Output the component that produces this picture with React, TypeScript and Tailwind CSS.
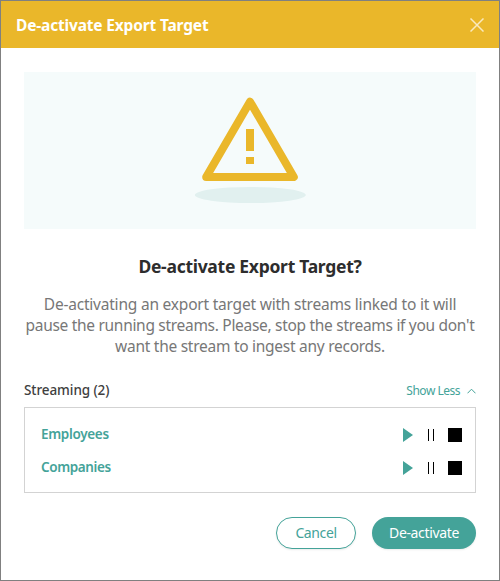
import React from "react";

function Play() {
  return (
    <svg width="10" height="14" viewBox="0 0 10 14" className="block">
      <path d="M0 0L10 7L0 14Z" fill="#44a399" />
    </svg>
  );
}

function Pause() {
  return (
    <div className="ml-[15px] flex h-3 w-1.5 justify-between">
      <span className="w-px bg-black" />
      <span className="w-px bg-black" />
    </div>
  );
}

function StreamRow({ name, tracking }: { name: string; tracking: string }) {
  return (
    <div className="flex h-[33px] items-center">
      <span className={`flex-1 text-[13.5px] font-semibold text-[#44a399] ${tracking}`}>{name}</span>
      <Play />
      <Pause />
      <span className="ml-[14px] size-3.5 bg-black" />
    </div>
  );
}

export default function App() {
  return (
    <div className="flex h-[581px] w-[500px] flex-col border border-[#808080] bg-white font-['Noto_Sans','Open_Sans',sans-serif] whitespace-nowrap">
      <header className="flex h-[47px] items-center justify-between bg-[#eab72a] pr-[15px] pl-[15px]">
        <h1 className="pt-[2px] text-[15.5px] font-bold tracking-[-0.17px] text-white">De-activate Export Target</h1>
        <button aria-label="Close">
          <svg width="14" height="14" viewBox="0 0 14 14" fill="none" stroke="#f9e9be" strokeWidth="1.5" className="block">
            <path d="M0.5 0.5L13.5 13.5M13.5 0.5L0.5 13.5" />
          </svg>
        </button>
      </header>
      <main className="flex flex-col px-[23px] pt-6">
        <div className="flex h-[157px] justify-center bg-[#f5fbfb]">
          <svg width="120" height="157" viewBox="190 72 120 157">
            <ellipse cx="250.3" cy="195" rx="55.5" ry="8" fill="#e1f0ef" />
            <path d="M250 101.700L293.800 177H206.200Z" fill="none" stroke="#eab72a" strokeWidth="8" strokeLinejoin="round" />
            <path d="M246 129H254V151H246ZM246 157H254V164H246Z" fill="#eab72a" />
          </svg>
        </div>
        <h2 className="mt-[24px] text-center text-[17.5px] leading-[26px] font-bold tracking-[-0.28px] text-[#2d2d2d]">De-activate Export Target?</h2>
        <p className="mt-[15px] text-center text-[15.5px] leading-[21px] text-[#777777]">
          <span className="block tracking-[-0.21px]">De-activating an export target with streams linked to it will</span>
          <span className="block tracking-[-0.3px]">pause the running streams. Please, stop the streams if you don't</span>
          <span className="block tracking-[-0.27px]">want the stream to ingest any records.</span>
        </p>
        <div className="mt-[24px] flex h-[20px] items-center justify-between">
          <span className="pb-px text-[13.5px] font-medium tracking-[-0.08px] text-[#404040]">Streaming (2)</span>
          <span className="flex items-center gap-[7px] text-[12px] tracking-[-0.5px] text-[#44a399]">
            Show Less
            <svg width="9" height="6" viewBox="0 0 9 6" fill="none" stroke="currentColor">
              <path d="M0.500 5.300L4.500 1.200L8.500 5.300" />
            </svg>
          </span>
        </div>
        <div className="mt-[6px] h-[86px] border border-[#d3d3d3] pt-[10px] pr-[13px] pl-4">
          <StreamRow name="Employees" tracking="tracking-[-0.33px]" />
          <StreamRow name="Companies" tracking="tracking-[-0.4px]" />
        </div>
        <div className="mt-6 flex justify-end gap-4 text-[14px]">
          <button className="h-8 w-20 rounded-full border border-[#44a399] bg-white pb-0.5 tracking-[-0.4px] text-[#44a399] shadow-[0_1px_2px_rgba(0,0,0,0.08)]">Cancel</button>
          <button className="h-8 w-[104px] rounded-full bg-[#44a399] pb-0.5 tracking-[-0.35px] text-white shadow-[0_1px_2px_rgba(0,0,0,0.08)]">De-activate</button>
        </div>
      </main>
    </div>
  );
}
